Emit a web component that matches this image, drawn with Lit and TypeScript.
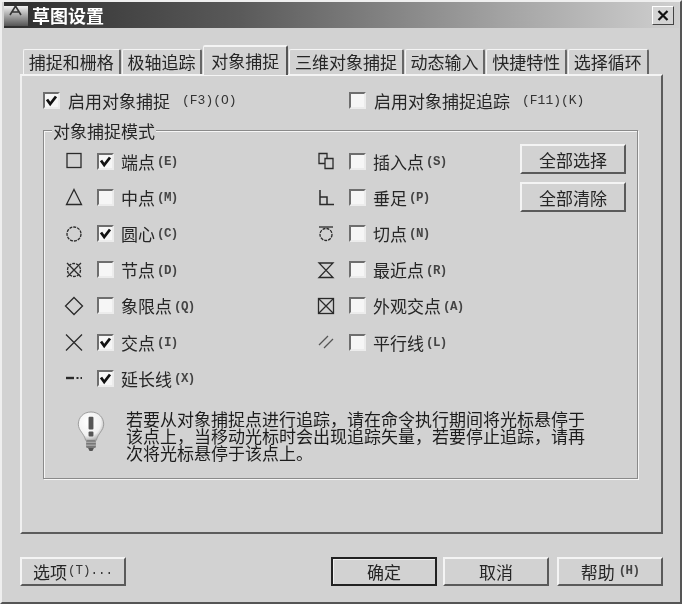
import { LitElement, html, css, svg } from "lit";
import { customElement } from "lit/decorators.js";

const I = (c: unknown) => html`<svg class="ico" viewBox="0 0 20 20" fill="none" stroke="#2a2a2a" stroke-width="1.3">${c}</svg>`;
const icons: Record<string, unknown> = {
  square: svg`<rect x="3" y="2.5" width="14" height="14"/>`,
  tri: svg`<path d="M10 2.5 L17.5 17.5 H2.5 Z"/>`,
  circle: svg`<circle cx="10" cy="11" r="7" stroke-dasharray="3 1"/>`,
  node: svg`<circle cx="10" cy="10" r="6.5" stroke-dasharray="3 1"/><path d="M3 3 L17 17 M17 3 L3 17"/>`,
  diamond: svg`<path d="M10 1.5 L18.5 10 L10 18.5 L1.5 10 Z"/>`,
  cross: svg`<path d="M2 2.5 L18 18.5 M18 2.5 L2 18.5"/>`,
  ext: svg`<path d="M2 10 H10" stroke-width="2.4"/><path d="M12.5 10 H14.5 M16.5 10 H18" stroke-width="1.8"/>`,
  insert: svg`<path d="M3 2.5 H11 V7.5 H17 V17.5 H9 V12.5 H3 Z M9 12.5 V7.5 H11"/>`,
  perp: svg`<path d="M4 3 V17.5 H18 M4 10 H11 V17.5" stroke-width="1.5"/>`,
  tan: svg`<circle cx="10" cy="11.5" r="6" stroke-dasharray="3 1"/><path d="M3 4 H17"/>`,
  glass: svg`<path d="M3 3 H17 L3 17.5 H17 Z"/>`,
  boxx: svg`<rect x="2.5" y="2.5" width="15" height="15"/><path d="M2.5 2.5 L17.5 17.5 M17.5 2.5 L2.5 17.5"/>`,
  par: svg`<path d="M3 13 L12 4 M8 16 L17 7" stroke="#555"/>`,
};

const left: [string, boolean, string, string][] = [
  ["square", true, "端点", "(E)"],
  ["tri", false, "中点", "(M)"],
  ["circle", true, "圆心", "(C)"],
  ["node", false, "节点", "(D)"],
  ["diamond", false, "象限点", "(Q)"],
  ["cross", true, "交点", "(I)"],
  ["ext", true, "延长线", "(X)"],
];
const right: [string, boolean, string, string][] = [
  ["insert", false, "插入点", "(S)"],
  ["perp", false, "垂足", "(P)"],
  ["tan", false, "切点", "(N)"],
  ["glass", false, "最近点", "(R)"],
  ["boxx", false, "外观交点", "(A)"],
  ["par", false, "平行线", "(L)"],
];
const tabs = ["捕捉和栅格", "极轴追踪", "对象捕捉", "三维对象捕捉", "动态输入", "快捷特性", "选择循环"];

const cb = (on: boolean) => html`<span class="cb">${on
  ? html`<svg viewBox="0 0 13 13" width="13" height="13"><path d="M2 5.5 L5.2 10 L11 2.5" fill="none" stroke="#111" stroke-width="2.8"/></svg>`
  : ""}</span>`;

@customElement("app-root")
export class AppRoot extends LitElement {
  static styles = css`
    :host { display: block; width: 682px; height: 604px; overflow: hidden; background: #d2d2d2; }
    * { box-sizing: border-box; }
    .win {
      height: 604px; display: flex; flex-direction: column;
      border-right: 2px solid #555; border-bottom: 2px solid #555; border-left: 2px solid #efefef; border-top: 2px solid #efefef;
      font: 17px/17px "Noto Sans CJK SC", "Liberation Sans", sans-serif; color: #262626; filter: blur(0.35px);
      background: #d2d2d2; padding: 0 1px 0 2px;
    }
    .title {
      height: 26px; flex: none; display: flex; align-items: center; gap: 4px; padding: 0 5px 0 0;
      background: linear-gradient(90deg, #2e2e2e, #5a5a5a 35%, #a5a5a5 75%, #cfcfcf);
      color: #fff; font-weight: 700; font-size: 18px;
    }
    .title .logo { width: 24px; height: 24px; flex: none; }
    .title .name { flex: 1; }
    .close {
      width: 22px; height: 19px; background: #d4d4d4; display: flex; align-items: center; justify-content: center;
      border: 1px solid; border-color: #fff #444 #444 #fff;
    }
    .tabs { display: flex; gap: 1px; margin: 17px 0 0 19px; height: 29px; flex: none; align-items: flex-end; position: relative; z-index: 1; }
    .tab {
      height: 25px; padding: 3px 4.8px 0; white-space: nowrap; border-top: 1px solid #f4f4f4; border-left: 1px solid #f4f4f4;
      border-right: 2px solid #666; border-radius: 2px 2px 0 0; background: #d2d2d2; font-size: 17px;
    }
    .tab.active { height: 30px; padding: 5px 7px 0; margin-bottom: -1px; border-top: 2px solid #f4f4f4; border-right: 2px solid #555; }
    .pane {
      flex: 1; margin: 0 0 0 16px; width: 643px; display: flex; flex-direction: column; padding: 16px 0 0 0;
      border: 2px solid; border-color: #f4f4f4 #5c5c5c #5c5c5c #f0f0f0;
    }
    .enable { display: flex; height: 17px; }
    .enable .half { display: flex; align-items: center; gap: 8px; }
    .enable .half:first-child { margin-left: 21px; width: 306px; }
    .mono { font: 700 12.5px/17px "Liberation Mono", monospace; color: #444; white-space: pre; letter-spacing: -0.6px; }
    .mono.big { font-size: 13px; font-weight: 400; color: #333; margin-left: 4px; letter-spacing: 0; }
    .cb {
      width: 17px; height: 17px; flex: none; background: #f6f6f6; display: flex; align-items: center; justify-content: center;
      border: 2px solid; border-color: #6e6e6e #ececec #ececec #6e6e6e;
    }
    .group {
      position: relative; margin: 21px 0 0 21px; width: 595px; height: 349px;
      border: 1px solid #8a8a8a; box-shadow: 1px 1px 0 #f6f6f6, inset 1px 1px 0 #f6f6f6;
      padding: 12px 0 0 20px;
    }
    .legend { position: absolute; top: -9px; left: 8px; background: #d2d2d2; padding: 0 1px; height: 17px; }
    .cols { display: flex; }
    .col { width: 252px; display: grid; grid-auto-rows: 36.2px; }
    .col.r { width: 204px; }
    .row { display: flex; align-items: center; }
    .ico { width: 20px; height: 20px; flex: none; margin-right: 13px; }
    .row .cb { margin-right: 7px; }
    .lab { display: flex; align-items: center; }
    .lab .mono { margin-left: 2px; padding-top: 3px; }
    .btns { display: flex; flex-direction: column; gap: 8px; padding-top: 1px; }
    .btn {
      width: 106px; height: 30px; display: flex; align-items: center; justify-content: center; background: #d2d2d2;
      border: 2px solid; border-color: #f4f4f4 #5a5a5a #5a5a5a #f4f4f4; font-size: 17px;
    }
    .btn .mono { margin-left: 1px; }
    .btn .mono.t { font-size: 12.5px; font-weight: 400; color: #333; letter-spacing: 0; }
    .btn .mono.h { margin-left: 4px; }
    .btn.def { border: 2px solid #222; box-shadow: inset 1px 1px 0 #f0f0f0; }
    .hint { display: flex; margin-top: 14px; padding-left: 13px; gap: 21px; }
    .bulb { width: 28px; height: 41px; flex: none; margin-top: 1px; }
    .hint p { margin: 0; width: 470px; color: #1c1c1c; }
    .foot { flex: none; height: 68px; margin-left: 16px; width: 643px; display: flex; padding-top: 23px; align-items: flex-start; }
    .foot .btn { height: 29px; }
    .foot .sp { flex: 1; }
    .foot .gap { width: 6px; }
    .foot .gap2 { width: 8px; }
  `;

  private row(r: [string, boolean, string, string]) {
    return html`<div class="row">${I(icons[r[0]])}${cb(r[1])}<span class="lab">${r[2]}<span class="mono">${r[3]}</span></span></div>`;
  }

  render() {
    return html`<div class="win">
      <div class="title">
        <svg class="logo" viewBox="0 0 24 24">
          <defs><linearGradient id="lg" x1="0" y1="0" x2="0" y2="1"><stop offset="0" stop-color="#f0f0f0"/><stop offset="1" stop-color="#555"/></linearGradient></defs>
          <rect x="0" y="3" width="24" height="20" fill="url(#lg)"/>
          <path d="M6 12 L11.5 3 L17 12 M8.5 9 H14.5" fill="none" stroke="#333" stroke-width="1.6"/>
        </svg>
        <span class="name">草图设置</span>
        <span class="close"><svg width="12" height="11" viewBox="0 0 12 11"><path d="M1.5 1 L10.5 10 M10.5 1 L1.5 10" stroke="#111" stroke-width="2.2"/></svg></span>
      </div>
      <div class="tabs">${tabs.map((t, i) => html`<div class="tab ${i === 2 ? "active" : ""}">${t}</div>`)}</div>
      <div class="pane">
        <div class="enable">
          <div class="half">${cb(true)}<span>启用对象捕捉</span><span class="mono big">(F3)(O)</span></div>
          <div class="half">${cb(false)}<span>启用对象捕捉追踪</span><span class="mono big">(F11)(K)</span></div>
        </div>
        <div class="group">
          <div class="legend">对象捕捉模式</div>
          <div class="cols">
            <div class="col">${left.map((r) => this.row(r))}</div>
            <div class="col r">${right.map((r) => this.row(r))}</div>
            <div class="btns"><div class="btn">全部选择</div><div class="btn">全部清除</div></div>
          </div>
          <div class="hint">
            <svg class="bulb" viewBox="0 0 28 42">
              <defs><radialGradient id="bg" cx="0.4" cy="0.35" r="0.7"><stop offset="0" stop-color="#fff"/><stop offset="0.7" stop-color="#f0f0f0"/><stop offset="1" stop-color="#a8a8a8"/></radialGradient></defs>
              <path d="M14 1 C6 1 1 7 1 13.5 C1 20 7 23 8.5 30 H19.5 C21 23 27 20 27 13.5 C27 7 22 1 14 1 Z" fill="url(#bg)" stroke="#9a9a9a"/>
              <rect x="11.5" y="6" width="5" height="13" rx="1" fill="#555"/>
              <rect x="11.5" y="21" width="5" height="5" rx="1" fill="#555"/>
              <rect x="9" y="30" width="10" height="8" rx="1.5" fill="#777"/>
              <path d="M9 32 H19 M9 35 H19" stroke="#bbb"/>
              <path d="M11 38 H17 L15.5 41 H12.5 Z" fill="#555"/>
            </svg>
            <p>若要从对象捕捉点进行追踪，请在命令执行期间将光标悬停于该点上，当移动光标时会出现追踪矢量，若要停止追踪，请再次将光标悬停于该点上。</p>
          </div>
        </div>
      </div>
      <div class="foot">
        <div class="btn">选项<span class="mono t">(T)...</span></div>
        <div class="sp"></div>
        <div class="btn def">确定</div><div class="gap"></div>
        <div class="btn">取消</div><div class="gap2"></div>
        <div class="btn">帮助<span class="mono h">(H)</span></div>
      </div>
    </div>`;
  }
}
